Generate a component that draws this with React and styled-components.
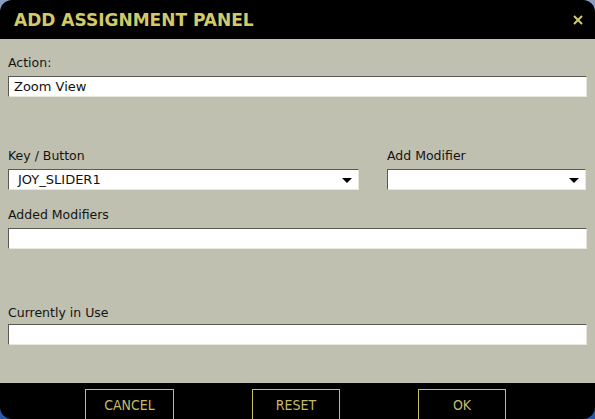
import React from "react";
import styled, { createGlobalStyle } from "styled-components";

const GlobalStyle = createGlobalStyle`
  html, body {
    margin: 0;
    padding: 0;
    height: 419px;
    overflow: hidden;
  }
  body {
    background: linear-gradient(180deg, #8a9cc0 0%, #4a6aa8 60%, #2a58a8 100%);
    font-family: "DejaVu Sans", Verdana, sans-serif;
  }
`;

const Dialog = styled.div`
  width: 595px;
  height: 419px;
  display: flex;
  flex-direction: column;
  background: #000;
  border-radius: 12px;
  overflow: hidden;
`;

const Header = styled.div`
  height: 39px;
  display: flex;
  align-items: center;
  justify-content: space-between;
  padding: 0 14px 0 14px;
  box-sizing: border-box;
`;

const Title = styled.h1`
  margin: 0;
  font-family: "DejaVu Sans", Verdana, sans-serif;
  font-weight: bold;
  font-size: 17px;
  color: #d2ca68;
`;

const Close = styled.button`
  border: 0;
  background: none;
  padding: 0;
  margin-right: -2px;
  display: flex;
  cursor: pointer;
`;

const Body = styled.div`
  flex: 1;
  background: #bfc0b0;
  padding: 16px 8px 0 8px;
  display: flex;
  flex-direction: column;
`;

const Field = styled.div`
  display: flex;
  flex-direction: column;
  margin-top: ${(p) => p.$top || 0}px;
`;

const Label = styled.label`
  font-size: 12.5px;
  line-height: 15px;
  color: #141414;
  margin-bottom: ${(p) => p.$gap ?? 6}px;
`;

const Box = styled.div`
  position: relative;
  height: 21px;
  box-sizing: border-box;
  background: #fff;
  border-top: 1px solid #5a5a52;
  border-left: 1px solid #5a5a52;
  border-bottom: 1px solid #e6e6dc;
  border-right: 1px solid #e6e6dc;
  display: flex;
  align-items: center;
  padding-left: ${(p) => p.$pad || 5}px;
  font-size: 13px;
  color: #111;
`;

const Arrow = styled.span`
  position: absolute;
  right: 6px;
  top: 8px;
  width: 0;
  height: 0;
  border-left: 5px solid transparent;
  border-right: 5px solid transparent;
  border-top: 5px solid #000;
`;

const Row = styled.div`
  display: grid;
  grid-template-columns: 351px 1fr;
  column-gap: 28px;
  margin-top: ${(p) => p.$top || 0}px;
  padding-right: 1px;
`;

const Footer = styled.div`
  height: 36px;
  box-sizing: border-box;
  padding: 6px 0 0 85px;
  display: flex;
  gap: 78px;
`;

const Button = styled.button`
  width: ${(p) => p.$w || 88}px;
  height: 31px;
  box-sizing: border-box;
  background: #000;
  border: 1px solid #c8c060;
  color: #c4bc6c;
  font-family: "DejaVu Sans Condensed", "DejaVu Sans", sans-serif;
  font-stretch: condensed;
  font-size: 14px;
  padding: 0;
  cursor: pointer;
`;

const Select = ({ value }) => (
  <Box $pad={9}>
    {value}
    <Arrow />
  </Box>
);

export default function App() {
  return (
    <>
      <GlobalStyle />
      <Dialog>
        <Header>
          <Title>ADD ASSIGNMENT PANEL</Title>
          <Close aria-label="close">
            <svg width="10" height="10" viewBox="0 0 10 10">
              <path d="M1 1 L9 9 M9 1 L1 9" stroke="#d2ca68" strokeWidth="2" />
            </svg>
          </Close>
        </Header>
        <Body>
          <Field>
            <Label>Action:</Label>
            <Box>Zoom View</Box>
          </Field>
          <Row $top={51}>
            <Field>
              <Label>Key / Button</Label>
              <Select value="JOY_SLIDER1" />
            </Field>
            <Field>
              <Label>Add Modifier</Label>
              <Select value="" />
            </Field>
          </Row>
          <Field $top={17}>
            <Label>Added Modifiers</Label>
            <Box />
          </Field>
          <Field $top={56}>
            <Label $gap={4}>Currently in Use</Label>
            <Box />
          </Field>
        </Body>
        <Footer>
          <Button $w={89}>CANCEL</Button>
          <Button>RESET</Button>
          <Button>OK</Button>
        </Footer>
      </Dialog>
    </>
  );
}
